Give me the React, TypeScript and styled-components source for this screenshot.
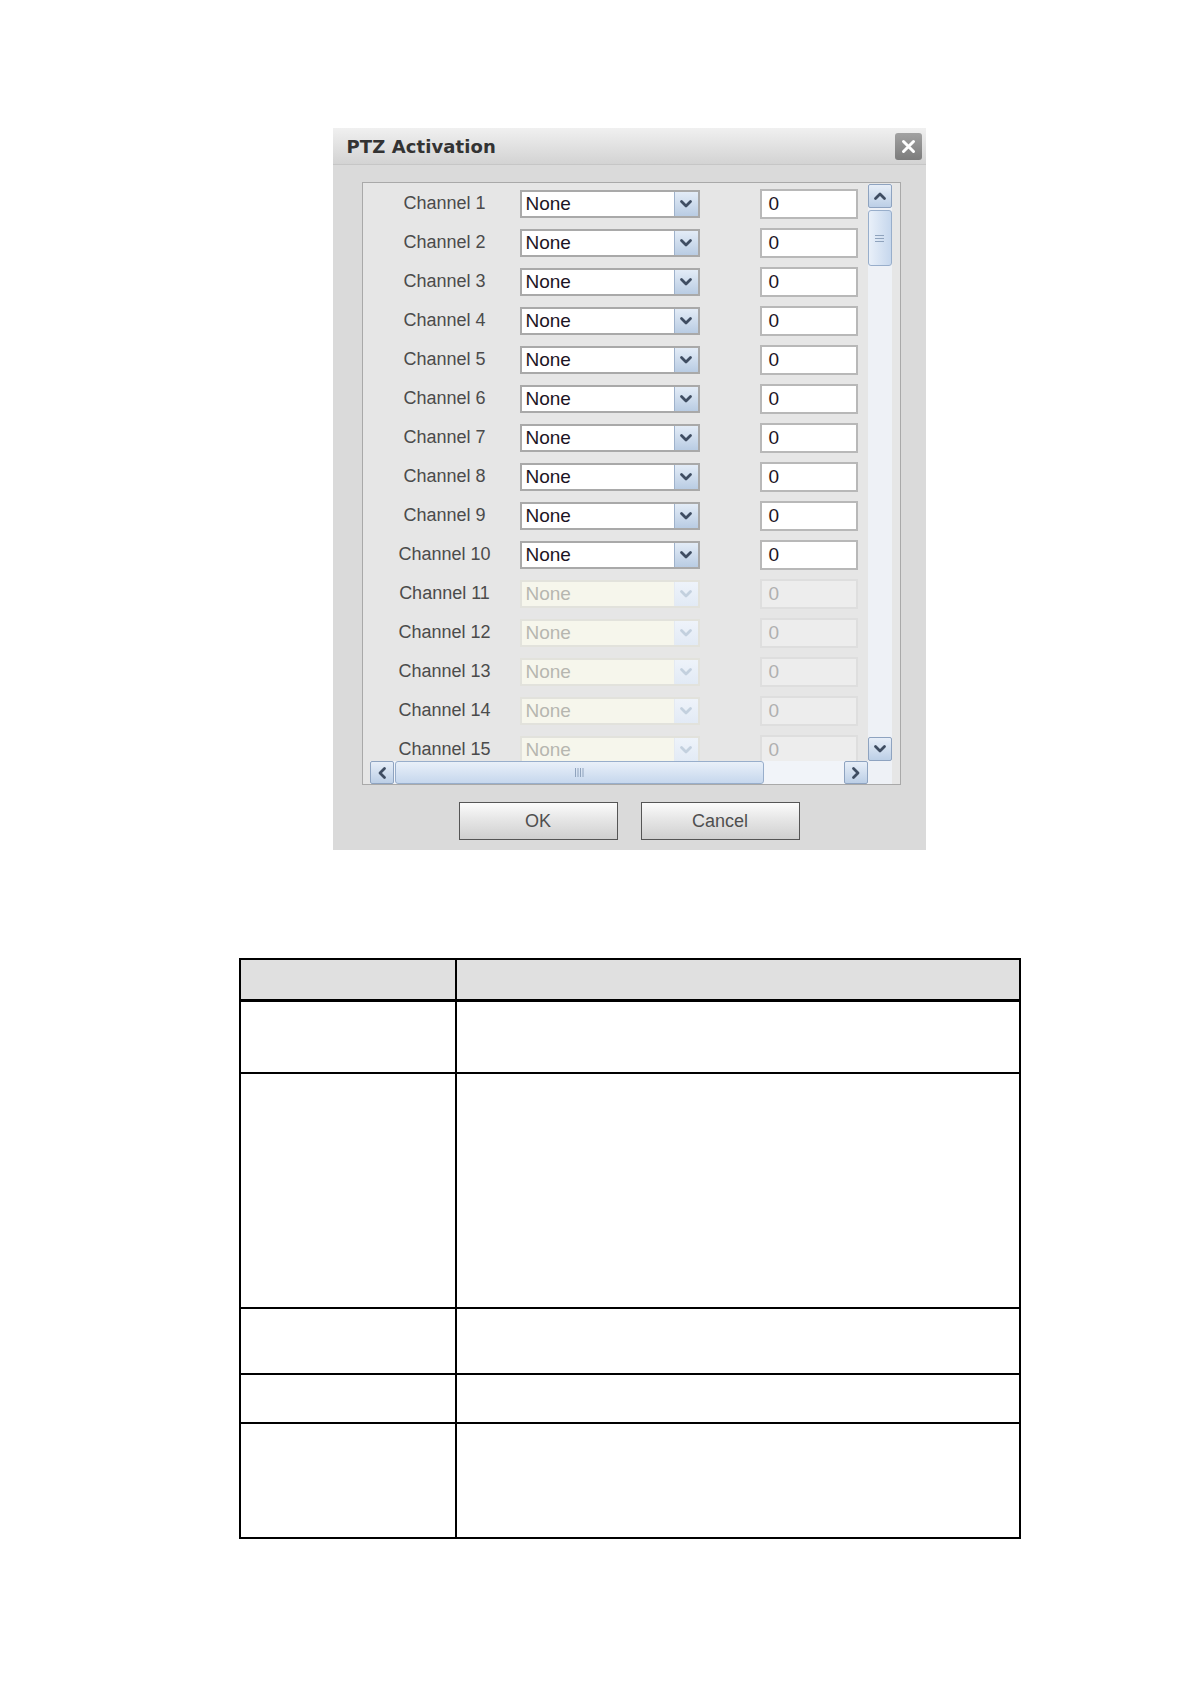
import React from "react";
import styled, { createGlobalStyle } from "styled-components";

const Global = createGlobalStyle`
  html, body { margin: 0; padding: 0; background: #ffffff; }
  body { font-family: "Liberation Sans", Arial, sans-serif; }
  * { box-sizing: border-box; }
`;

const Page = styled.div`
  width: 1191px;
  min-height: 1684px;
  padding: 128px 0 0 239px;
  display: flex;
  flex-direction: column;
  align-items: flex-start;
`;

const Column = styled.div`
  width: 782px;
  display: flex;
  flex-direction: column;
  align-items: center;
`;

const Dialog = styled.div`
  width: 593px;
  height: 722px;
  margin-right: 2px;
  background: #dadada;
  display: flex;
  flex-direction: column;
`;

const TitleBar = styled.div`
  height: 37px;
  background: linear-gradient(#f0f0f0, #d3d3d3);
  border-bottom: 1px solid #c6c6c6;
  display: flex;
  align-items: center;
  justify-content: space-between;
  padding: 0 4px 0 14px;
`;

const Title = styled.div`
  font-family: "DejaVu Sans", Verdana, sans-serif;
  font-weight: bold;
  font-size: 18px;
  color: #333333;
  letter-spacing: 0.1px;
`;

const CloseButton = styled.div`
  width: 27px;
  height: 27px;
  border-radius: 3px;
  background: linear-gradient(#a2a2a2, #7c7c7c);
  display: flex;
  align-items: center;
  justify-content: center;
`;

const Panel = styled.div`
  margin: 17px 25px 0 29px;
  border: 1px solid #a9a9a9;
  background: #e6e6e6;
  padding: 1px 8px 0 7px;
  display: grid;
  grid-template-columns: 498px 24px;
  grid-template-rows: 577px 23px;
`;

const Viewport = styled.div`
  overflow: hidden;
`;

const Row = styled.div`
  height: 39px;
  display: grid;
  grid-template-columns: 150px 180px 60px 98px;
  align-items: center;
`;

const Label = styled.div`
  text-align: center;
  font-size: 18px;
  color: #4b4b4b;
  white-space: nowrap;
`;

const SelectBox = styled.div<{ $disabled?: boolean }>`
  height: 28px;
  display: flex;
  align-items: stretch;
  border: 2px solid ${(p) => (p.$disabled ? "#e2e2dc" : "#a9a9a9")};
  background: ${(p) => (p.$disabled ? "#f6f6ec" : "#ffffff")};
`;

const SelectText = styled.div<{ $disabled?: boolean }>`
  flex: 1;
  display: flex;
  align-items: center;
  padding-left: 4px;
  font-size: 19px;
  color: ${(p) => (p.$disabled ? "#b6b6b0" : "#1c1424")};
`;

const ArrowBox = styled.div<{ $disabled?: boolean }>`
  width: 24px;
  display: flex;
  align-items: center;
  justify-content: center;
  background: ${(p) =>
    p.$disabled ? "linear-gradient(#eef3fa, #e2eaf5)" : "linear-gradient(#e3ecf7, #b9cce3)"};
  border-left: 1px solid ${(p) => (p.$disabled ? "#e4eaf2" : "#9fb2cb")};
`;

const NumberBox = styled.div<{ $disabled?: boolean }>`
  height: 30px;
  display: flex;
  align-items: center;
  padding-left: 7px;
  font-size: 19px;
  border: 2px solid ${(p) => (p.$disabled ? "#dedede" : "#b8b8b8")};
  background: ${(p) => (p.$disabled ? "#ededed" : "#ffffff")};
  color: ${(p) => (p.$disabled ? "#b0b0b0" : "#1c1424")};
`;

const VScroll = styled.div`
  display: flex;
  flex-direction: column;
  background: #eef1f6;
`;

const HScroll = styled.div`
  display: flex;
  align-items: stretch;
  background: #f1f4f9;
`;

const Corner = styled.div`
  background: #eef1f6;
`;

const ScrollButton = styled.div`
  width: 24px;
  height: 24px;
  flex: none;
  border: 1px solid #8ea3c0;
  border-radius: 2px;
  background: linear-gradient(#e7eef8, #bccfe6);
  display: flex;
  align-items: center;
  justify-content: center;
`;

const HButton = styled(ScrollButton)`
  height: 23px;
`;

const Track = styled.div<{ $horizontal?: boolean }>`
  flex: 1;
  display: flex;
  flex-direction: ${(p) => (p.$horizontal ? "row" : "column")};
  padding: ${(p) => (p.$horizontal ? "0 0 0 1px" : "2px 0 0 0")};
`;

const VThumb = styled.div`
  height: 56px;
  border: 1px solid #98aecb;
  border-radius: 3px;
  background: linear-gradient(90deg, #e9f0f9, #c6d7ed);
  display: flex;
  align-items: center;
  justify-content: center;
`;

const HThumb = styled.div`
  width: 369px;
  border: 1px solid #98aecb;
  border-radius: 3px;
  background: linear-gradient(#e9f0f9, #c6d7ed);
  display: flex;
  align-items: center;
  justify-content: center;
`;

const Buttons = styled.div`
  margin-top: 17px;
  display: flex;
  justify-content: center;
  gap: 23px;
`;

const Button = styled.div`
  width: 159px;
  height: 38px;
  border: 1px solid #555555;
  background: linear-gradient(#fbfbfb, #e6e6e6 45%, #cfcfcf);
  display: flex;
  align-items: center;
  justify-content: center;
  font-size: 18px;
  color: #4f4f4f;
`;

const DocTable = styled.table`
  margin-top: 108px;
  width: 782px;
  border-collapse: collapse;
  table-layout: fixed;
`;

const HeadCell = styled.th<{ $w?: number }>`
  height: 41px;
  background: #e0e0e0;
  border: 2px solid #000000;
  border-bottom-width: 3px;
  width: ${(p) => (p.$w ? `${p.$w}px` : "auto")};
`;

const Cell = styled.td<{ $h: number }>`
  height: ${(p) => p.$h}px;
  border: 2px solid #000000;
  background: #ffffff;
`;

const Chevron = ({ dir, color }: { dir: "up" | "down" | "left" | "right"; color: string }) => {
  const paths: Record<string, string> = {
    down: "M2.5 4.5 L7 9 L11.5 4.5",
    up: "M2.5 9.5 L7 5 L11.5 9.5",
    left: "M9.5 2.5 L5 7 L9.5 11.5",
    right: "M4.5 2.5 L9 7 L4.5 11.5",
  };
  return (
    <svg width="14" height="14" viewBox="0 0 14 14">
      <path d={paths[dir]} fill="none" stroke={color} strokeWidth="2.8" strokeLinecap="round" strokeLinejoin="round" />
    </svg>
  );
};

const channels = Array.from({ length: 15 }, (_, i) => i + 1);
const rowHeights = [73, 235, 66, 49, 115];

export default function App() {
  return (
    <>
      <Global />
      <Page>
        <Column>
          <Dialog>
            <TitleBar>
              <Title>PTZ Activation</Title>
              <CloseButton>
                <svg width="15" height="15" viewBox="0 0 15 15">
                  <path d="M2.5 2.5 L12.5 12.5 M12.5 2.5 L2.5 12.5" stroke="#ffffff" strokeWidth="3" strokeLinecap="round" />
                </svg>
              </CloseButton>
            </TitleBar>
            <Panel>
              <Viewport>
                {channels.map((n) => {
                  const disabled = n > 10;
                  return (
                    <Row key={n}>
                      <Label>Channel {n}</Label>
                      <SelectBox $disabled={disabled}>
                        <SelectText $disabled={disabled}>None</SelectText>
                        <ArrowBox $disabled={disabled}>
                          <Chevron dir="down" color={disabled ? "#c3d0de" : "#3f4d62"} />
                        </ArrowBox>
                      </SelectBox>
                      <div />
                      <NumberBox $disabled={disabled}>0</NumberBox>
                    </Row>
                  );
                })}
              </Viewport>
              <VScroll>
                <ScrollButton>
                  <Chevron dir="up" color="#3f4d62" />
                </ScrollButton>
                <Track>
                  <VThumb>
                    <svg width="9" height="9" viewBox="0 0 9 9">
                      <path d="M0 1.5 H9 M0 4.5 H9 M0 7.5 H9" stroke="#8fa3bd" strokeWidth="1" />
                    </svg>
                  </VThumb>
                </Track>
                <ScrollButton>
                  <Chevron dir="down" color="#3f4d62" />
                </ScrollButton>
              </VScroll>
              <HScroll>
                <HButton>
                  <Chevron dir="left" color="#3f4d62" />
                </HButton>
                <Track $horizontal>
                  <HThumb>
                    <svg width="11" height="9" viewBox="0 0 11 9">
                      <path d="M1.5 0 V9 M4 0 V9 M6.5 0 V9 M9 0 V9" stroke="#8fa3bd" strokeWidth="1" />
                    </svg>
                  </HThumb>
                </Track>
                <HButton>
                  <Chevron dir="right" color="#3f4d62" />
                </HButton>
              </HScroll>
              <Corner />
            </Panel>
            <Buttons>
              <Button>OK</Button>
              <Button>Cancel</Button>
            </Buttons>
          </Dialog>
          <DocTable>
            <thead>
              <tr>
                <HeadCell $w={216}></HeadCell>
                <HeadCell></HeadCell>
              </tr>
            </thead>
            <tbody>
              {rowHeights.map((h, i) => (
                <tr key={i}>
                  <Cell $h={h}></Cell>
                  <Cell $h={h}></Cell>
                </tr>
              ))}
            </tbody>
          </DocTable>
        </Column>
      </Page>
    </>
  );
}
